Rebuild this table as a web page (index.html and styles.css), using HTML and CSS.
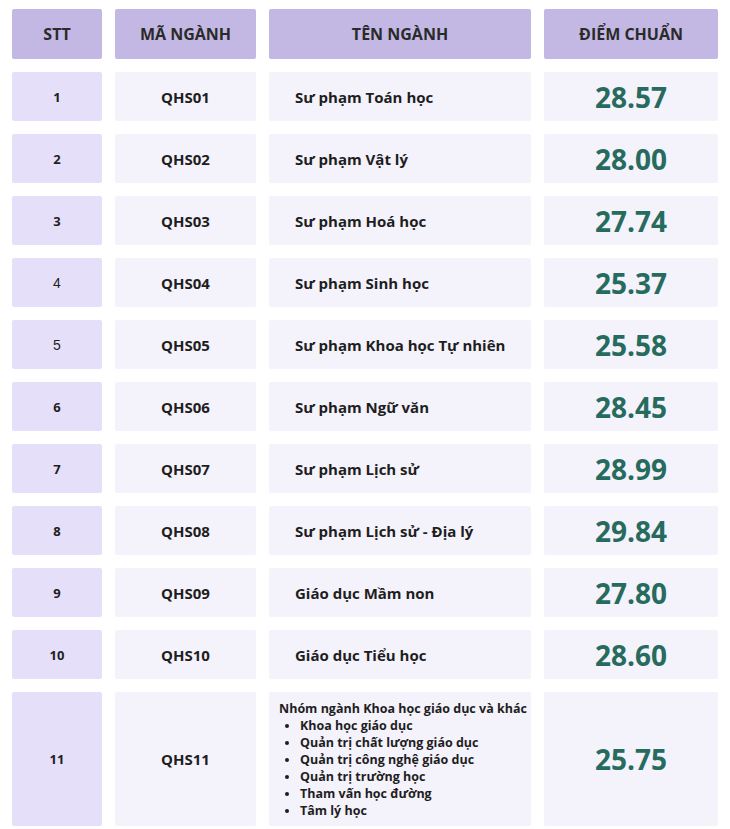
FILE: index.html
```html
<!DOCTYPE html>
<html lang="vi">
<head>
<meta charset="utf-8">
<title>Điểm chuẩn</title>
<link rel="stylesheet" href="styles.css">
</head>
<body>
<div class="table">
  <div class="th">STT</div>
  <div class="th">MÃ NGÀNH</div>
  <div class="th">TÊN NGÀNH</div>
  <div class="th">ĐIỂM CHUẨN</div>

  <div class="stt">1</div><div class="code">QHS01</div><div class="name">Sư phạm Toán học</div><div class="score">28.57</div>
  <div class="stt">2</div><div class="code">QHS02</div><div class="name">Sư phạm Vật lý</div><div class="score">28.00</div>
  <div class="stt">3</div><div class="code">QHS03</div><div class="name">Sư phạm Hoá học</div><div class="score">27.74</div>
  <div class="stt stt-plain">4</div><div class="code">QHS04</div><div class="name">Sư phạm Sinh học</div><div class="score">25.37</div>
  <div class="stt stt-plain">5</div><div class="code">QHS05</div><div class="name">Sư phạm Khoa học Tự nhiên</div><div class="score">25.58</div>
  <div class="stt">6</div><div class="code">QHS06</div><div class="name">Sư phạm Ngữ văn</div><div class="score">28.45</div>
  <div class="stt">7</div><div class="code">QHS07</div><div class="name">Sư phạm Lịch sử</div><div class="score">28.99</div>
  <div class="stt">8</div><div class="code">QHS08</div><div class="name">Sư phạm Lịch sử - Địa lý</div><div class="score">29.84</div>
  <div class="stt">9</div><div class="code">QHS09</div><div class="name">Giáo dục Mầm non</div><div class="score">27.80</div>
  <div class="stt">10</div><div class="code">QHS10</div><div class="name">Giáo dục Tiểu học</div><div class="score">28.60</div>

  <div class="stt">11</div><div class="code">QHS11</div>
  <div class="name group">
    <div class="group-title">Nhóm ngành Khoa học giáo dục và khác</div>
    <ul class="group-list">
      <li>Khoa học giáo dục</li>
      <li>Quản trị chất lượng giáo dục</li>
      <li>Quản trị công nghệ giáo dục</li>
      <li>Quản trị trường học</li>
      <li>Tham vấn học đường</li>
      <li>Tâm lý học</li>
    </ul>
  </div>
  <div class="score">25.75</div>
</div>
</body>
</html>
```

FILE: styles.css
```css
html, body {
  margin: 0;
  padding: 0;
  background: #ffffff;
}

body {
  font-family: "Open Sans", "Noto Sans", sans-serif;
  color: #1e1e1e;
}

.table {
  display: grid;
  grid-template-columns: 90px 141px 262px 174px;
  grid-template-rows: 50px repeat(10, 49px) 134px;
  column-gap: 13px;
  row-gap: 13px;
  padding: 9px 0 0 12px;
}

.table > div {
  border-radius: 2px;
  display: flex;
  align-items: center;
}

.th {
  background: #c3b8e3;
  justify-content: center;
  font-weight: 700;
  font-size: 16px;
  color: #2a2a2a;
}

.stt {
  background: #e6dff9;
  justify-content: center;
  font-weight: 700;
  font-size: 13px;
}

.stt-plain {
  font-family: "Liberation Sans", Arial, sans-serif;
  font-weight: 400;
  font-size: 14px;
}

.code {
  background: #f4f2fb;
  justify-content: center;
  font-weight: 700;
  font-size: 15px;
}

.name {
  background: #f4f2fb;
  font-weight: 700;
  font-size: 15px;
  padding-left: 26px;
}

.score {
  background: #f4f2fb;
  justify-content: center;
  font-weight: 700;
  font-size: 28px;
  color: #276b5e;
}

.table > .group {
  flex-direction: column;
  align-items: flex-start;
  justify-content: center;
  padding-left: 10px;
  font-size: 12.5px;
  line-height: 17px;
  white-space: nowrap;
}

.group-list {
  margin: 0;
  padding: 0 0 0 21px;
  list-style: disc;
}
```
